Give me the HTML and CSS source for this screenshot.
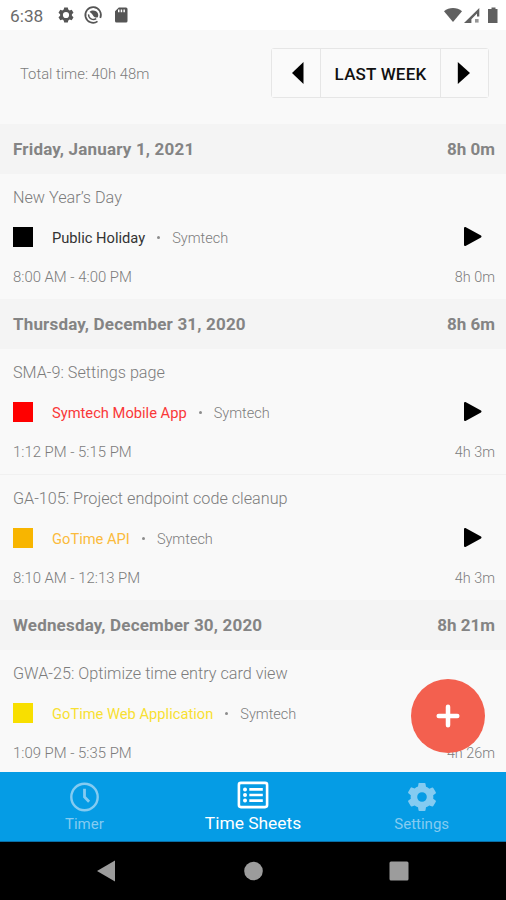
FILE: index.html
```
<!DOCTYPE html>
<html lang="en">
<head>
  <meta charset="UTF-8">
  <meta name="viewport" content="width=device-width, initial-scale=1.0">
  <title>Time Sheets</title>
  <link rel="stylesheet" href="styles.css">
</head>
<body>
  <div class="phone">
    <div class="status-bar">
      <span class="clock">6:38</span>
      <svg class="status-left" width="76" height="20" viewBox="0 0 76 20">
        <g transform="translate(8 10)" fill="#555">
          <path fill-rule="evenodd" d="M-1.8-7.5h3.6l.5 2.1 1.3.8 2.1-.7 1.8 3.1-1.6 1.5v1.4l1.6 1.5-1.8 3.1-2.1-.7-1.3.8-.5 2.1h-3.6l-.5-2.1-1.3-.8-2.1.7-1.8-3.1 1.6-1.5v-1.4l-1.6-1.5 1.8-3.1 2.1.7 1.3-.8zM0-3.1a3.1 3.1 0 1 0 0 6.2 3.1 3.1 0 0 0 0-6.2z"/>
        </g>
        <g fill="none" stroke="#555">
          <path d="M39.5 16.4A7.8 7.8 0 1 1 42.3 13" stroke-width="1.7"/>
          <path d="M30.6 9.4a4.8 4.8 0 0 0 7.6 4.2" stroke-width="1.4"/>
        </g>
        <path d="M31.5 6.9c2.6-2.3 7.3-1.5 8.5 1.9.4 1.2.3 2.4-.2 3.4-1.7.8-3.8.2-4.6-1.5-.6-1.5-1.9-2.9-3.7-3.8z" fill="#555"/>
        <path fill-rule="evenodd" d="M60.8 2.5H68a1.5 1.5 0 0 1 1.5 1.5v12a1.5 1.5 0 0 1-1.5 1.5h-9.5A1.5 1.5 0 0 1 57 16V6.3zM60 4.5v2.7h1.5V4.5zm2.7 0v2.7h1.5V4.5zm2.7 0v2.7h1.5V4.5z" fill="#555"/>
      </svg>
      <svg class="status-right" width="56" height="18" viewBox="0 0 56 18" fill="#606060">
        <path d="M0 4.2C5-.2 13-.2 18 4.2L9 15z"/>
        <path fill-rule="evenodd" d="M20 16 35.3 1v8.5H33V6.6l-5.6 5.6V16z"/>
        <path d="M31 12h3.6v3.6H31z" opacity=".65"/>
        <path d="M45.5 2h2V.5h4V2h2v14h-9.5V2z"/>
      </svg>
    </div>

    <div class="top">
      <div class="total">Total time: 40h 48m</div>
      <div class="week-picker">
        <button class="arrow"><svg width="14" height="22" viewBox="0 0 14 22"><path d="M12.5 0v22L1 11z"/></svg></button>
        <button class="week">LAST WEEK</button>
        <button class="arrow next"><svg width="14" height="22" viewBox="0 0 14 22"><path d="M.8 0v22L13 11z"/></svg></button>
      </div>
    </div>

    <div class="list">
      <div class="day"><span class="date">Friday, January 1, 2021</span><span>8h 0m</span></div>
      <div class="entry">
        <div class="title">New Year’s Day</div>
        <div class="project black">
          <span class="box"></span><span class="name">Public Holiday</span><span class="dot"></span><span class="client">Symtech</span>
          <svg class="play" width="20" height="22" viewBox="0 0 20 22"><path d="M2 2v17l15.5-8.5z"/></svg>
        </div>
        <div class="times"><span>8:00 AM - 4:00 PM</span><span class="duration">8h 0m</span></div>
      </div>

      <div class="day"><span class="date">Thursday, December 31, 2020</span><span>8h 6m</span></div>
      <div class="entry">
        <div class="title">SMA-9: Settings page</div>
        <div class="project red">
          <span class="box"></span><span class="name">Symtech Mobile App</span><span class="dot"></span><span class="client">Symtech</span>
          <svg class="play" width="20" height="22" viewBox="0 0 20 22"><path d="M2 2v17l15.5-8.5z"/></svg>
        </div>
        <div class="times"><span>1:12 PM - 5:15 PM</span><span class="duration">4h 3m</span></div>
      </div>
      <div class="entry">
        <div class="title">GA-105: Project endpoint code cleanup</div>
        <div class="project orange">
          <span class="box"></span><span class="name">GoTime API</span><span class="dot"></span><span class="client">Symtech</span>
          <svg class="play" width="20" height="22" viewBox="0 0 20 22"><path d="M2 2v17l15.5-8.5z"/></svg>
        </div>
        <div class="times"><span>8:10 AM - 12:13 PM</span><span class="duration">4h 3m</span></div>
      </div>

      <div class="day"><span class="date">Wednesday, December 30, 2020</span><span>8h 21m</span></div>
      <div class="entry">
        <div class="title">GWA-25: Optimize time entry card view</div>
        <div class="project yellow">
          <span class="box"></span><span class="name">GoTime Web Application</span><span class="dot"></span><span class="client">Symtech</span>
        </div>
        <div class="times"><span>1:09 PM - 5:35 PM</span><span class="duration">4h 26m</span></div>
      </div>

      <button class="add">
        <svg width="24" height="24" viewBox="0 0 24 24"><path d="M12 2.7v18.6M2.7 12h18.6"/></svg>
      </button>
    </div>

    <div class="tabs">
      <div class="tab">
        <svg width="30" height="30" viewBox="0 0 30 30" fill="none" stroke="#84cbf1">
          <circle cx="15.5" cy="15" r="13.2" stroke-width="2.4"/>
          <path d="M15.5 6.8V15l4.6 4.8" stroke-width="2.8"/>
        </svg>
        <span>Timer</span>
      </div>
      <div class="tab active">
        <svg width="32" height="28" viewBox="0 0 32 28" fill="none" stroke="#fff">
          <rect x="1.9" y="1.9" width="28.2" height="24.2" rx="2" stroke-width="2.6"/>
          <path d="M12.3 8.4h13.5M12.3 14h13.5M12.3 19.6h13.5" stroke-width="2.6"/>
          <path d="M8 8.4h.01M8 14h.01M8 19.6h.01" stroke-width="4" stroke-linecap="round"/>
        </svg>
        <span>Time Sheets</span>
      </div>
      <div class="tab">
        <svg width="30" height="30" viewBox="-15 -15 30 30" fill="#84cbf1">
          <path fill-rule="evenodd" d="M-2.6-14h5.2q.8 0 .9.8l.5 3q1.9.7 3.3 1.9l2.9-1.1q.7-.3 1.1.4l2.5 4.3q.4.7-.2 1.2L11.2-1.8q.3 1.8 0 3.6l2.4 1.8q.6.5.2 1.2l-2.5 4.3q-.4.7-1.1.4L7.3 8.4Q5.9 9.6 4 10.3l-.5 2.9q-.1.8-.9.8h-5.2q-.8 0-.9-.8l-.5-2.9q-1.9-.7-3.3-1.9l-2.9 1.1q-.7.3-1.1-.4l-2.5-4.3q-.4-.7.2-1.2l2.4-1.8q-.3-1.8 0-3.6l-2.4-1.9q-.6-.5-.2-1.2l2.5-4.3q.4-.7 1.1-.4l2.9 1.1q1.4-1.2 3.3-1.9l.5-3q.1-.8.9-.8zM0-4.8a4.8 4.8 0 1 0 0 9.6 4.8 4.8 0 0 0 0-9.6z"/>
        </svg>
        <span>Settings</span>
      </div>
    </div>

    <div class="system-nav">
      <svg width="20" height="22" viewBox="0 0 20 22"><path d="M18 .5v21L0 11z"/></svg>
      <svg width="20" height="20" viewBox="0 0 20 20"><circle cx="10.5" cy="10" r="9.3"/></svg>
      <svg width="20" height="20" viewBox="0 0 20 20"><rect x=".5" y=".5" width="19" height="19" rx="1.5"/></svg>
    </div>
  </div>
</body>
</html>
```

FILE: styles.css
```
* {
  box-sizing: border-box;
}
body {
  margin: 0;
  font-family: Roboto, sans-serif;
  color: #7c7c7c;
}
button {
  font-family: inherit;
  margin: 0;
  padding: 0;
}
svg {
  display: block;
  flex-shrink: 0;
}
.phone {
  width: 506px;
  height: 900px;
  display: flex;
  flex-direction: column;
  overflow: hidden;
  background: #f9f9f9;
}
.status-bar {
  height: 30px;
  flex-shrink: 0;
  display: flex;
  align-items: center;
  padding: 0 6px 0 10px;
  background: #fff;
}
.clock {
  width: 48px;
  font-size: 17.3px;
  line-height: 32px;
  padding-top: 2px;
  color: #6b6b6b;
}
.status-right {
  margin-left: auto;
  margin-top: 2px;
}
.top {
  height: 94px;
  flex-shrink: 0;
  display: flex;
  align-items: center;
  justify-content: space-between;
  padding: 0 17px 8px 20px;
  background: #f9f9f9;
}
.total {
  font-size: 14.8px;
  font-weight: 300;
  padding-top: 1px;
}
.week-picker {
  display: flex;
  height: 50px;
  border: 1px solid #e6e6e6;
  border-radius: 3px;
}
.week-picker button {
  display: flex;
  align-items: center;
  justify-content: center;
  border: 0;
  background: #fafafa;
  width: 48px;
}
.week-picker .arrow:first-child {
  padding-left: 3px;
}
.week-picker .next {
  width: 47px;
  padding-right: 2px;
}
.week-picker .week {
  width: 121px;
  border: solid #e6e6e6;
  border-width: 0 1px;
  font-size: 17px;
  font-weight: 500;
  letter-spacing: 0.2px;
  padding-top: 1px;
  color: #111;
}
.list {
  position: relative;
  flex: 1;
  overflow: hidden;
}
.day {
  height: 50px;
  display: flex;
  align-items: center;
  justify-content: space-between;
  padding: 0 11px 0 13px;
  background: #f4f4f4;
  font-size: 17px;
  font-weight: 700;
  color: #848484;
}
.date {
  letter-spacing: 0.18px;
}
.entry {
  height: 125px;
  padding: 12px 11px 0 13px;
}
.entry + .entry {
  height: 126px;
  border-top: 1px solid #f1f1f1;
}
.title {
  height: 24px;
  line-height: 24px;
  font-size: 16.2px;
  font-weight: 300;
}
.project {
  display: flex;
  align-items: center;
  height: 22px;
  margin-top: 16px;
  font-size: 14.7px;
}
.box {
  width: 20px;
  height: 20px;
  margin-right: 19px;
}
.black .box {
  background: #000;
}
.black .name {
  color: #333;
}
.red .box {
  background: #f00;
}
.red .name {
  color: #fa3838;
}
.orange .box {
  background: #f8b500;
}
.orange .name {
  color: #fbbb3c;
}
.yellow .box {
  background: #f8df00;
}
.yellow .name {
  color: #f8e032;
}
.name {
  padding-top: 1px;
}
.dot {
  width: 3px;
  height: 3px;
  margin: 0 12px;
  border-radius: 50%;
  background: #8c8c8c;
}
.client {
  padding-top: 2px;
  font-size: 14.5px;
  font-weight: 300;
}
.play {
  margin-left: auto;
  margin-right: 12px;
  stroke: #000;
  stroke-width: 2;
  stroke-linejoin: round;
}
.times {
  display: flex;
  align-items: baseline;
  justify-content: space-between;
  margin-top: 18px;
  line-height: 22px;
  font-size: 14.9px;
  font-weight: 300;
}
.duration {
  font-size: 14.4px;
}
.add {
  position: absolute;
  right: 21px;
  bottom: 19px;
  width: 74px;
  height: 74px;
  display: flex;
  align-items: center;
  justify-content: center;
  border: 0;
  border-radius: 50%;
  background: #f3604f;
}
.add path {
  stroke: #fff;
  stroke-width: 4.5;
  stroke-linecap: round;
}
.tabs {
  height: 70px;
  flex-shrink: 0;
  display: flex;
  background: #059ce5;
  border-bottom: 1px solid #0a6ea6;
}
.tab {
  flex: 1;
  display: flex;
  flex-direction: column;
  align-items: center;
  padding-top: 10px;
  font-size: 15px;
  line-height: 20px;
  color: #84cbf1;
}
.tab span {
  margin-top: 2px;
}
.tab.active {
  padding-top: 9px;
  font-size: 17.4px;
  color: #fff;
}
.tab.active span {
  margin-top: 4px;
}
.system-nav {
  height: 58px;
  flex-shrink: 0;
  display: flex;
  align-items: center;
  justify-content: center;
  gap: 126px;
  background: #000;
}
.system-nav svg {
  fill: #9c9c9c;
}
```
